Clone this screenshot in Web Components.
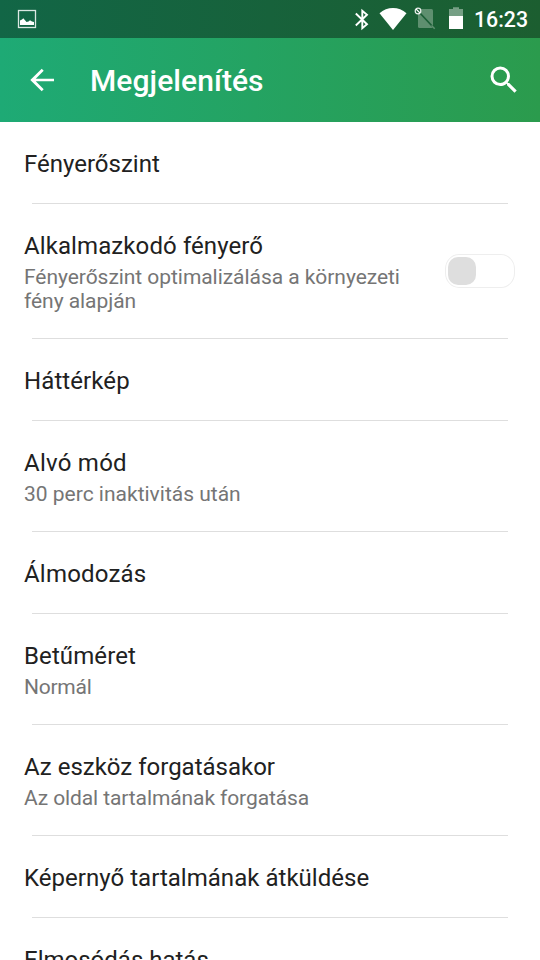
<!DOCTYPE html>
<html lang="hu"><head><meta charset="utf-8"><title>Megjelenítés</title>
<style>html,body{margin:0;height:960px;overflow:hidden;background:#fff;font-family:Roboto,sans-serif}</style></head>
<body>
<settings-screen></settings-screen>
<script>
const define=(name,html)=>customElements.define(name,class extends HTMLElement{
  constructor(){super();const t=document.createElement('template');t.innerHTML=html;this.attachShadow({mode:'open'}).append(t.content.cloneNode(true));}
});
define('status-bar',`<style>
:host{display:flex;height:38px;align-items:center;box-sizing:border-box;padding:0 12px 0 15px;color:#fff;background:linear-gradient(90deg,#126646,#1c5e30)}
svg{display:block;height:38px;flex:none}
.notice{margin-right:auto}
span{margin-left:4px;font-size:21.3px;line-height:38px;font-weight:500;padding-top:2px}
</style>
<svg class="notice" width="24" viewBox="15 0 24 38"><rect x="18.5" y="10.5" width="17" height="17" fill="none" stroke="#fff" stroke-opacity=".85" stroke-width="1.3"/><path fill="#fff" d="M20 25V20.500L22 19.500L23.300 18.300L26.500 22L28.500 21.500L30 20.300L32 21.500L34 22V25Z"/></svg>
<svg width="120" viewBox="350 0 120 38">
<path d="M355.8 13.500L367 24.300L362.300 28.300V10.700L367 14.700L355.800 25.500" fill="none" stroke="#fff" stroke-width="1.9"/>
<path d="M379.5 13.3C387 6.2 399 6.2 406.500 13.300L393 30Z" fill="#fff"/>
<path d="M418 9H431.500Q433 9 433 10.500V26.500Q433 28 431.500 28H419.500Q418 28 418 26.500Z" fill="#5e8f6f"/>
<path d="M419 12L433 27" stroke="#1b5e36" stroke-width="1.7"/>
<path d="M431.500 25.500L434.700 28.700" stroke="#5e8f6f" stroke-width="1.5"/>
<circle cx="418" cy="11" r="2.8" fill="#1b5e36" stroke="#fff" stroke-opacity=".9" stroke-width="1.2"/><path d="M416 9L420 13" stroke="#fff" stroke-width="1.1"/>
<path d="M449 9H453V7.300H459V9H463V16H449Z" fill="#fff" fill-opacity=".4"/><path d="M449 16H463V29H449Z" fill="#fff"/>
</svg><span>16:23</span>`);
define('app-bar',`<style>
:host{display:flex;align-items:center;height:84px;box-sizing:border-box;padding:0 18px 0 24px;background:linear-gradient(90deg,#1eaa75,#2b9b4d);color:#fff}
svg{width:36px;height:36px;fill:#fff}h1{margin:0 auto 0 30px;padding-top:2px;font-size:30px;line-height:36px;font-weight:500;letter-spacing:.08px}
</style><svg viewBox="0 0 24 24"><path d="M20 11.100H7.830l5.300-5.300-1.300-1.300L4.200 12l7.630 7.500 1.300-1.300L7.830 12.900H20z"/></svg><h1><slot></slot></h1>
<svg viewBox="0 0 24 24"><path d="M15.5 14h-.79l-.28-.27A6.47 6.47 0 0 0 16 9.5 6.5 6.5 0 1 0 9.5 16c1.61 0 3.09-.59 4.23-1.57l.27.28v.79l5 4.99L20.490 19l-4.990-5zm-6 0a4.500 4.500 0 1 1 0-9 4.500 4.500 0 0 1 0 9z"/></svg>`);
define('toggle-switch',`<style>:host{display:block;box-sizing:border-box;width:70px;height:34px;border:1.5px solid #eee;border-radius:14px/15px;padding:2px}i{display:block;width:28px;height:28px;border-radius:10px;background:#dedede}</style><i></i>`);
define('setting-row',`<style>
:host{display:flex;align-items:center;justify-content:space-between;box-sizing:border-box;padding:25px 25px 23px 24px;position:relative}
:host::after{content:"";position:absolute;left:32px;right:32px;bottom:0;height:1px;background:#dedede}
.title{font-size:24px;line-height:34px;color:#212121;white-space:nowrap;letter-spacing:var(--title-spacing,0)}
::slotted([slot=summary]){font-size:21px;line-height:24px;color:#757575;margin-top:2px;padding-bottom:3px;letter-spacing:var(--summary-spacing,0)}
::slotted([slot=control]){margin-bottom:3px}
</style><div><div class="title"><slot></slot></div><slot name="summary"></slot></div><slot name="control"></slot>`);
define('settings-screen',`<style>:host{display:block;height:960px;overflow:hidden;position:relative}div{display:block}</style>
<status-bar></status-bar><app-bar>Megjelenítés</app-bar>
<setting-row>Fényerőszint</setting-row>
<setting-row style="--title-spacing:.1px;--summary-spacing:-.05px">Alkalmazkodó fényerő<div slot="summary">Fényerőszint optimalizálása a környezeti<br>fény alapján</div><toggle-switch slot="control"></toggle-switch></setting-row>
<setting-row style="--title-spacing:.1px">Háttérkép</setting-row>
<setting-row style="--title-spacing:.25px">Alvó mód<div slot="summary">30 perc inaktivitás után</div></setting-row>
<setting-row style="--title-spacing:.2px">Álmodozás</setting-row>
<setting-row style="--title-spacing:.1px;--summary-spacing:-.25px">Betűméret<div slot="summary">Normál</div></setting-row>
<setting-row style="--summary-spacing:-.1px">Az eszköz forgatásakor<div slot="summary">Az oldal tartalmának forgatása</div></setting-row>
<setting-row style="--title-spacing:.03px">Képernyő tartalmának átküldése</setting-row>
<setting-row>Elmosódás hatás</setting-row>`);
</script></body></html>
